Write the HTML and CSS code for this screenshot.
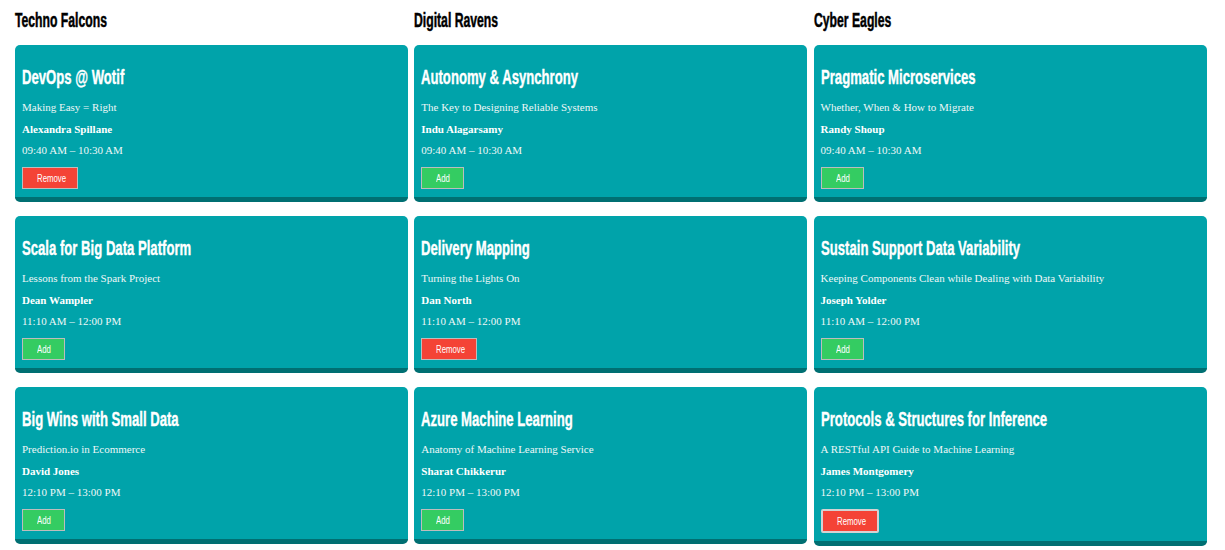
FILE: index.html
```html
<!DOCTYPE html>
<html>
<head>
<meta charset="utf-8">
<link rel="stylesheet" href="styles.css">
</head>
<body>
<div class="board">
  <section class="col">
    <h3 class="track"><span class="cond">Techno Falcons</span></h3>
    <div class="cards">
      <div class="card">
        <h2 class="title"><span class="cond">DevOps @ Wotif</span></h2>
        <p class="sub">Making Easy = Right</p>
        <p class="speaker">Alexandra Spillane</p>
        <p class="time">09:40 AM – 10:30 AM</p>
        <button class="btn remove"><span class="cond">Remove</span></button>
      </div>
      <div class="card">
        <h2 class="title"><span class="cond">Scala for Big Data Platform</span></h2>
        <p class="sub">Lessons from the Spark Project</p>
        <p class="speaker">Dean Wampler</p>
        <p class="time">11:10 AM – 12:00 PM</p>
        <button class="btn add"><span class="cond">Add</span></button>
      </div>
      <div class="card">
        <h2 class="title"><span class="cond">Big Wins with Small Data</span></h2>
        <p class="sub">Prediction.io in Ecommerce</p>
        <p class="speaker">David Jones</p>
        <p class="time">12:10 PM – 13:00 PM</p>
        <button class="btn add"><span class="cond">Add</span></button>
      </div>
    </div>
  </section>
  <section class="col">
    <h3 class="track"><span class="cond">Digital Ravens</span></h3>
    <div class="cards">
      <div class="card">
        <h2 class="title"><span class="cond">Autonomy &amp; Asynchrony</span></h2>
        <p class="sub">The Key to Designing Reliable Systems</p>
        <p class="speaker">Indu Alagarsamy</p>
        <p class="time">09:40 AM – 10:30 AM</p>
        <button class="btn add"><span class="cond">Add</span></button>
      </div>
      <div class="card">
        <h2 class="title"><span class="cond">Delivery Mapping</span></h2>
        <p class="sub">Turning the Lights On</p>
        <p class="speaker">Dan North</p>
        <p class="time">11:10 AM – 12:00 PM</p>
        <button class="btn remove"><span class="cond">Remove</span></button>
      </div>
      <div class="card">
        <h2 class="title"><span class="cond">Azure Machine Learning</span></h2>
        <p class="sub">Anatomy of Machine Learning Service</p>
        <p class="speaker">Sharat Chikkerur</p>
        <p class="time">12:10 PM – 13:00 PM</p>
        <button class="btn add"><span class="cond">Add</span></button>
      </div>
    </div>
  </section>
  <section class="col">
    <h3 class="track"><span class="cond">Cyber Eagles</span></h3>
    <div class="cards">
      <div class="card">
        <h2 class="title"><span class="cond">Pragmatic Microservices</span></h2>
        <p class="sub">Whether, When &amp; How to Migrate</p>
        <p class="speaker">Randy Shoup</p>
        <p class="time">09:40 AM – 10:30 AM</p>
        <button class="btn add"><span class="cond">Add</span></button>
      </div>
      <div class="card">
        <h2 class="title"><span class="cond">Sustain Support Data Variability</span></h2>
        <p class="sub">Keeping Components Clean while Dealing with Data Variability</p>
        <p class="speaker">Joseph Yolder</p>
        <p class="time">11:10 AM – 12:00 PM</p>
        <button class="btn add"><span class="cond">Add</span></button>
      </div>
      <div class="card">
        <h2 class="title"><span class="cond">Protocols &amp; Structures for Inference</span></h2>
        <p class="sub">A RESTful API Guide to Machine Learning</p>
        <p class="speaker">James Montgomery</p>
        <p class="time">12:10 PM – 13:00 PM</p>
        <button class="btn remove focused"><span class="cond">Remove</span></button>
      </div>
    </div>
  </section>
</div>
</body>
</html>
```
FILE: styles.css
```css
html, body {
  margin: 0;
  padding: 0;
  background: #ffffff;
}
body {
  font-family: "Liberation Serif", "Times New Roman", serif;
}
.board {
  display: grid;
  grid-template-columns: repeat(3, 393px);
  column-gap: 6.3px;
  padding: 8px 0 0 15px;
}
.cond {
  display: inline-block;
  white-space: nowrap;
  transform-origin: left center;
}
.track {
  margin: 0 0 13px 0;
  font-family: "Liberation Sans", Arial, sans-serif;
  font-weight: bold;
  font-size: 20px;
  line-height: 24px;
  color: #000;
  -webkit-text-stroke: 0.5px #000;
}
.track .cond {
  transform: scaleX(0.61);
}
.cards {
  display: flex;
  flex-direction: column;
  gap: 14px;
}
.card {
  background: #00a3aa;
  border-bottom: 5px solid #006f72;
  border-radius: 5px;
  padding: 20px 7px 8px 7px;
  color: #ffffff;
}
.title {
  margin: 0;
  font-family: "Liberation Sans", Arial, sans-serif;
  font-weight: bold;
  font-size: 21px;
  line-height: 24px;
  -webkit-text-stroke: 0.4px #ffffff;
}
.title .cond {
  transform: scaleX(0.625);
}
.sub, .speaker, .time {
  margin: 0;
  font-size: 11px;
  line-height: 13px;
}
.sub {
  margin-top: 11.5px;
  color: #eef7f7;
}
.speaker {
  margin-top: 9px;
  font-weight: bold;
}
.time {
  margin-top: 8px;
  color: #eef7f7;
}
.btn {
  display: block;
  margin-top: 10.5px;
  height: 22px;
  padding: 0 0 0 14px;
  border: 1px solid #bdbdbd;
  border-radius: 0;
  color: #fff;
  text-align: left;
  font-family: "Liberation Sans", Arial, sans-serif;
  font-size: 10px;
  line-height: 21px;
}
.btn .cond {
  transform: scaleX(0.78);
}
.remove {
  background: #f44336;
  width: 56px;
}
.add {
  background: #34cc62;
  width: 43px;
}
.focused {
  width: 58px;
  height: 24px;
  padding-left: 14px;
  border: 2px solid #d3d3d3;
  border-radius: 2px;
}
```
